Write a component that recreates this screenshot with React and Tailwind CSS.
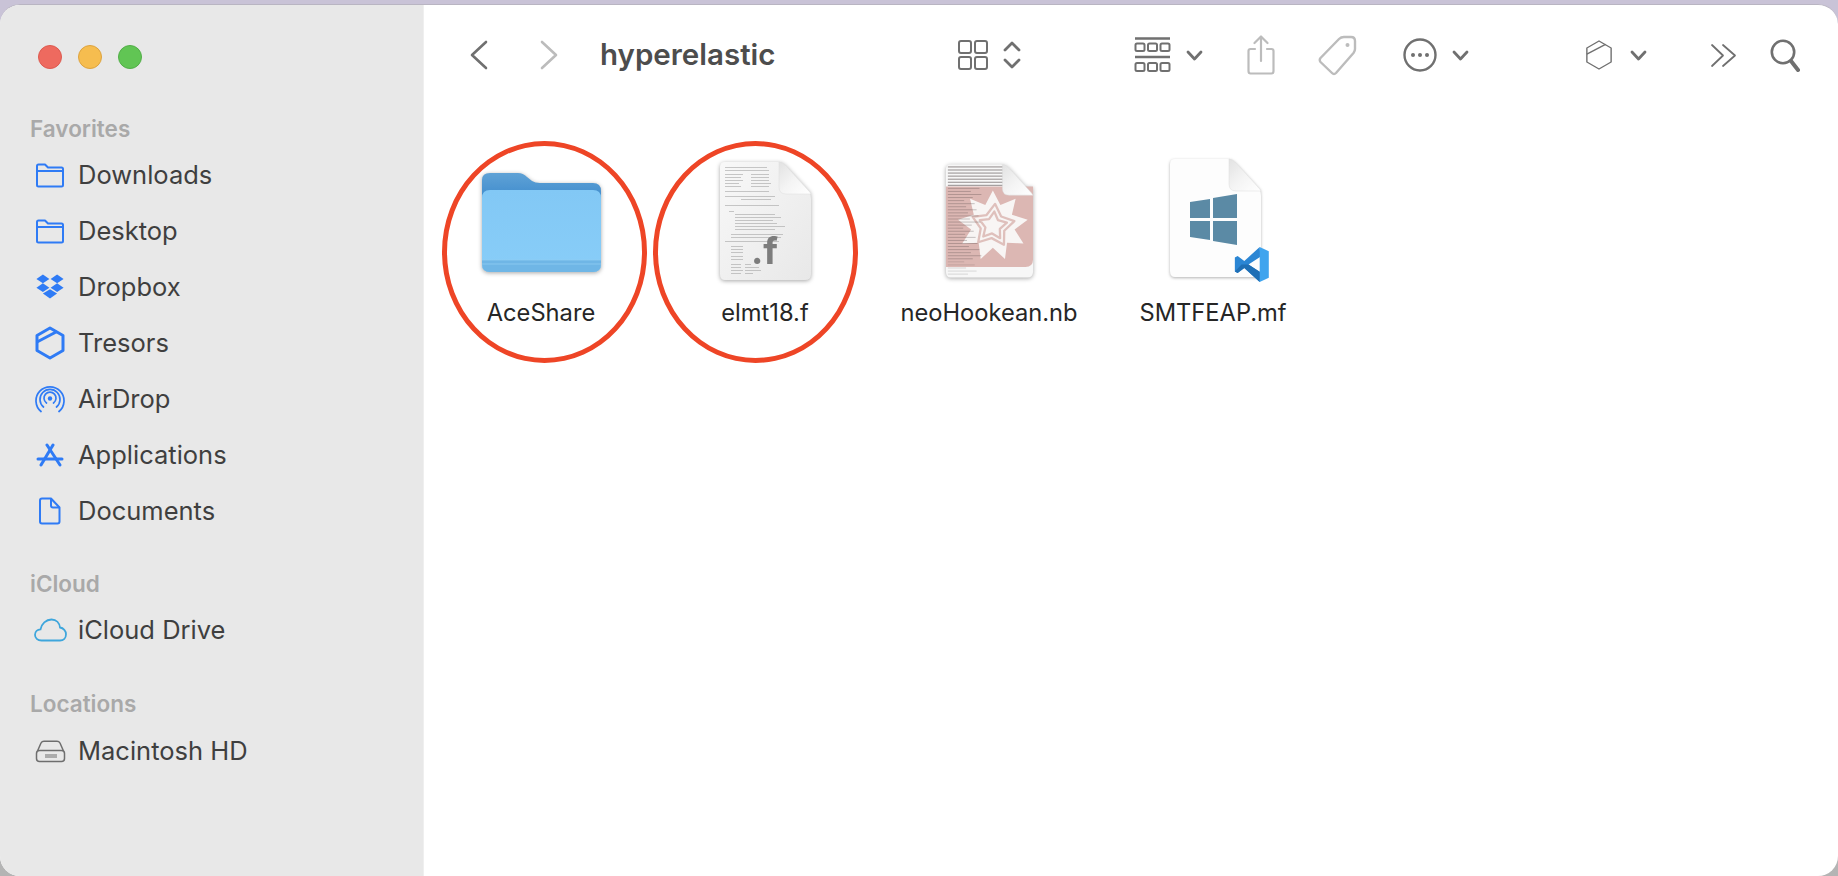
const FONT = "font-['Inter','Noto_Sans',sans-serif]";

const DOC_PATH = 'M6 1 H58 Q63 1 67 5 L88 28 Q92 32 92 38 V113 Q92 119 86 119 H6 Q1 119 1 113 V6 Q1 1 6 1 Z';

function FolderOutline() {
  return (
    <svg width="30" height="25" viewBox="0 0 30 25" fill="none" stroke="#2f7bf5" strokeWidth="2">
      <path d="M2 6 V3 Q2 1.500 3.500 1.500 H10 L13 4.500 H26.500 Q28 4.500 28 6 V22 Q28 23.500 26.500 23.500 H3.500 Q2 23.500 2 22 Z" strokeLinejoin="round" />
      <path d="M2 8 H28" />
    </svg>
  );
}

function Dropbox() {
  return (
    <svg width="30" height="26" viewBox="0 0 24 22" fill="#2f7bf5">
      <path d="M6 0.500 L0.500 4.200 L6 7.900 L11.500 4.200 Z M18 0.500 L12.500 4.200 L18 7.900 L23.500 4.200 Z M0.500 11.600 L6 15.300 L11.500 11.600 L6 7.900 Z M18 7.900 L12.500 11.600 L18 15.300 L23.500 11.600 Z M6 16.600 L12 20.800 L18 16.600 L12 12.800 Z" />
    </svg>
  );
}

function Hexagon({ w, h, color, sw }) {
  return (
    <svg width={w} height={h} viewBox="0 0 30 34" fill="none" stroke={color} strokeWidth={sw} strokeLinejoin="round">
      <path d="M15 2 L28 9.500 V24.500 L15 32 L2 24.500 V9.500 Z" />
      <path d="M2 16 L22 5.500" />
    </svg>
  );
}

function AirDrop() {
  return (
    <svg width="30" height="28" viewBox="0 0 30 28" fill="none" stroke="#2f7bf5" strokeWidth="1.700" strokeLinecap="round">
      <circle cx="15" cy="13.500" r="2.200" fill="#2f7bf5" stroke="none" />
      <path d="M11.500 18 A6 6 0 1 1 18.500 18" />
      <path d="M8.500 22 A10 10 0 1 1 21.500 22" />
      <path d="M6 26.500 A14 14 0 1 1 24 26.500" />
    </svg>
  );
}

function AppStore() {
  return (
    <svg width="28" height="24" viewBox="0 0 28 24" fill="none" stroke="#2f7bf5" strokeWidth="3" strokeLinecap="round">
      <path d="M17 2 L5 22" />
      <path d="M11 2 L24 22" />
      <path d="M2 16 H26" />
    </svg>
  );
}

function DocOutline() {
  return (
    <svg width="22" height="28" viewBox="0 0 22 28" fill="none" stroke="#2f7bf5" strokeWidth="2" strokeLinejoin="round">
      <path d="M3 1.500 H12 L20.500 10.500 V24.500 Q20.500 26.500 18.500 26.500 H3 Q1 26.500 1 24.500 V3.500 Q1 1.500 3 1.500 Z" />
      <path d="M12 1.500 V8.500 Q12 10.500 14 10.500 H20.500" />
    </svg>
  );
}

function CloudOutline() {
  return (
    <svg width="33" height="24" viewBox="0 0 33 24" fill="none" stroke="#3ea6dc" strokeWidth="1.800">
      <path d="M7.500 22.500 C3.500 22.500 1 20 1 16.800 C1 13.500 3.500 11.500 6.500 11.300 C7.500 6 12 1.500 17.500 1.500 C22.500 1.500 25.500 5 26 9.500 C29.500 10 32 13 32 16.300 C32 20 29.500 22.500 26 22.500 Z" />
    </svg>
  );
}

function Drive() {
  return (
    <svg width="31" height="23" viewBox="0 0 31 23" fill="none" stroke="#6e6e6e" strokeWidth="1.500">
      <path d="M2.500 11 L6 3 Q7 1.200 9 1.200 H22 Q24 1.200 25 3 L28.500 11" />
      <rect x="1.500" y="10.500" width="28" height="11" rx="3" />
      <path d="M11 14 V18 M13 14 V18 M15 14 V18 M17 14 V18 M19 14 V18 M21 14 V18" strokeWidth="1" />
    </svg>
  );
}

const SIDEBAR_TEXT = 'text-[25.500px] leading-none text-[#3f3f3f]';

function NavRow({ icon, label }) {
  return (
    <div className="flex h-[56px] items-center">
      <div className="flex w-[78px] items-center justify-center pl-[30px] pr-[8px]">{icon}</div>
      <span className={SIDEBAR_TEXT}>{label}</span>
    </div>
  );
}

function Heading({ children, className }) {
  return (
    <div className={'flex h-[28px] items-center pl-[30px] text-[22.500px] font-semibold text-[#a9a9a9] ' + className}>
      {children}
    </div>
  );
}

function Sidebar() {
  return (
    <aside className="flex w-[424px] shrink-0 flex-col border-r border-[#efefef] bg-[#e8e8e8]">
      <div className="flex gap-[16px] pl-[38px] pt-[40px]">
        <span className="h-[24px] w-[24px] rounded-full border border-[#dd5a50] bg-[#ee6a5f]" />
        <span className="h-[24px] w-[24px] rounded-full border border-[#dda33f] bg-[#f6bd4f]" />
        <span className="h-[24px] w-[24px] rounded-full border border-[#52ae48] bg-[#61c554]" />
      </div>
      <Heading className="mb-[4px] mt-[46px]">Favorites</Heading>
      <NavRow icon={<FolderOutline />} label="Downloads" />
      <NavRow icon={<FolderOutline />} label="Desktop" />
      <NavRow icon={<Dropbox />} label="Dropbox" />
      <NavRow icon={<Hexagon w={30} h={34} color="#2f7bf5" sw={3} />} label="Tresors" />
      <NavRow icon={<AirDrop />} label="AirDrop" />
      <NavRow icon={<AppStore />} label="Applications" />
      <NavRow icon={<DocOutline />} label="Documents" />
      <Heading className="mb-[4px] mt-[31px]">iCloud</Heading>
      <NavRow icon={<CloudOutline />} label="iCloud Drive" />
      <Heading className="mb-[5px] mt-[32px]">Locations</Heading>
      <NavRow icon={<Drive />} label="Macintosh HD" />
    </aside>
  );
}

function SmallChevron() {
  return (
    <svg width="17" height="11" viewBox="0 0 17 11" fill="none" stroke="#707070" strokeWidth="2.800" strokeLinecap="round" strokeLinejoin="round">
      <path d="M2 2 L8.500 9 L15 2" />
    </svg>
  );
}

function Toolbar() {
  return (
    <div className="flex h-[100px] items-center pl-[45px]">
      <svg width="19" height="30" viewBox="0 0 19 30" fill="none" stroke="#707070" strokeWidth="2.600" strokeLinecap="round" strokeLinejoin="round">
        <path d="M17 2 L3 15 L17 28" />
      </svg>
      <svg className="ml-[52px]" width="19" height="30" viewBox="0 0 19 30" fill="none" stroke="#bcbcbc" strokeWidth="2.600" strokeLinecap="round" strokeLinejoin="round">
        <path d="M2 2 L16 15 L2 28" />
      </svg>
      <span className="ml-[41px] w-[176px] whitespace-nowrap text-[29.500px] font-semibold leading-none text-[#4d4d4d]">hyperelastic</span>

      <svg className="ml-[182px]" width="30" height="30" viewBox="0 0 30 30" fill="none" stroke="#707070" strokeWidth="2">
        <rect x="1" y="1" width="12" height="12" rx="2" />
        <rect x="17" y="1" width="12" height="12" rx="2" />
        <rect x="1" y="17" width="12" height="12" rx="2" />
        <rect x="17" y="17" width="12" height="12" rx="2" />
      </svg>
      <svg className="ml-[15px]" width="18" height="30" viewBox="0 0 18 30" fill="none" stroke="#707070" strokeWidth="2.800" strokeLinecap="round" strokeLinejoin="round">
        <path d="M2 10 L9 3 L16 10" />
        <path d="M2 20 L9 27 L16 20" />
      </svg>

      <svg className="ml-[113px]" width="37" height="36" viewBox="0 0 37 36" fill="none" stroke="#707070">
        <path d="M1 1.500 H36 M1 20 H36" strokeWidth="2.600" />
        <rect x="1.500" y="6.500" width="9" height="7.500" rx="1.500" strokeWidth="2" />
        <rect x="14" y="6.500" width="9" height="7.500" rx="1.500" strokeWidth="2" />
        <rect x="26.500" y="6.500" width="9" height="7.500" rx="1.500" strokeWidth="2" />
        <rect x="1.500" y="26" width="9" height="8" rx="1.500" strokeWidth="2" />
        <rect x="14" y="26" width="9" height="8" rx="1.500" strokeWidth="2" />
        <rect x="26.500" y="26" width="9" height="8" rx="1.500" strokeWidth="2" />
      </svg>
      <div className="ml-[15px]"><SmallChevron /></div>

      <svg className="ml-[44px]" width="28" height="40" viewBox="0 0 28 40" fill="none" stroke="#bcbcbc" strokeWidth="2.200" strokeLinecap="round" strokeLinejoin="round">
        <path d="M8 14 H3.500 Q1.500 14 1.500 16 V36 Q1.500 38.500 3.500 38.500 H24.500 Q26.500 38.500 26.500 36 V16 Q26.500 14 24.500 14 H20" />
        <path d="M14 26 V2 M7.500 8 L14 1.500 L20.500 8" />
      </svg>
      <svg className="ml-[43px]" width="39" height="41" viewBox="0 0 39 41" fill="none" stroke="#bcbcbc" strokeWidth="2.400" strokeLinejoin="round">
        <path d="M26 2 H33 Q37 2 37 6 V14 Q37 16 35.500 18 L18 38 Q16 40 14 38 L2.500 27 Q1 25 2.500 23 L21 4 Q23 2 26 2 Z" />
        <circle cx="29.500" cy="10" r="2" fill="#bcbcbc" stroke="none" />
      </svg>
      <svg className="ml-[46px]" width="34" height="34" viewBox="0 0 34 34" fill="none" stroke="#707070" strokeWidth="2.400">
        <circle cx="17" cy="17" r="15.500" />
        <circle cx="10" cy="17" r="2" fill="#707070" stroke="none" />
        <circle cx="17" cy="17" r="2" fill="#707070" stroke="none" />
        <circle cx="24" cy="17" r="2" fill="#707070" stroke="none" />
      </svg>
      <div className="ml-[15px]"><SmallChevron /></div>

      <div className="ml-[116px] flex"><Hexagon w={28} h={32} color="#707070" sw={1.500} /></div>
      <div className="ml-[17px]"><SmallChevron /></div>

      <svg className="ml-[63px]" width="27" height="25" viewBox="0 0 27 25" fill="none" stroke="#707070" strokeWidth="1.800" strokeLinecap="round" strokeLinejoin="round">
        <path d="M2 2 L13 12.500 L2 23" />
        <path d="M13 2 L25 12.500 L13 23" />
      </svg>
      <svg className="ml-[33px]" width="30" height="33" viewBox="0 0 30 33" fill="none" stroke="#707070" strokeLinecap="round">
        <circle cx="13" cy="13" r="11.200" strokeWidth="2.600" />
        <path d="M21 22 L28 31" strokeWidth="4" />
      </svg>
    </div>
  );
}

function FolderBig() {
  return (
    <svg className="mb-[8px] drop-shadow-[0_1px_2px_rgba(0,0,0,0.35)]" width="119" height="101" viewBox="0 0 119 101">
      <defs>
        <linearGradient id="folderBack" x1="0" y1="0" x2="0" y2="1">
          <stop offset="0" stopColor="#5fa2d6" />
          <stop offset="1" stopColor="#2f80c8" />
        </linearGradient>
        <linearGradient id="folderFront" x1="0" y1="0" x2="0" y2="1">
          <stop offset="0" stopColor="#82c8f5" />
          <stop offset="1" stopColor="#88cdf8" />
        </linearGradient>
      </defs>
      <path d="M0 8 Q0 1 8 1 H36 Q41 1 45 5 L50 9 Q53 11 58 11 H111 Q119 11 119 19 V40 H0 Z" fill="url(#folderBack)" />
      <path d="M0 26 Q0 18 8 18 H111 Q119 18 119 26 V92 Q119 100 111 100 H8 Q0 100 0 92 Z" fill="url(#folderFront)" />
      <path d="M0 88 H119 V92 Q119 100 111 100 H8 Q0 100 0 92 Z" fill="#6fb6e6" />
      <path d="M0 88 H119 M0 92 H119" stroke="#8fcdf3" strokeWidth="0.800" />
    </svg>
  );
}

function FoldCorner({ id }) {
  return (
    <>
      <defs>
        <linearGradient id={id} x1="0" y1="0" x2="1" y2="1">
          <stop offset="0" stopColor="#e2e2e2" />
          <stop offset="0.500" stopColor="#f4f4f4" />
          <stop offset="1" stopColor="#ffffff" />
        </linearGradient>
      </defs>
      <path d="M60 1 Q63 1 67 5 L88 28 Q91 31 92 33 H67 Q60 33 60 26 Z" fill={'url(#' + id + ')'} stroke="#dcdcdc" strokeWidth="0.500" />
    </>
  );
}

// tiny printed-page lines for the thumbnails: [x, y, width]
const SOURCE_LINES = [
  [6, 6, 42], [6, 9, 44], [6, 13, 18], [32, 13, 18], [6, 16, 16], [32, 16, 18], [6, 19, 18], [32, 19, 18],
  [6, 22, 14], [32, 22, 20], [6, 25, 16], [32, 25, 18], [6, 30, 44], [6, 35, 50], [22, 38, 30], [6, 44, 54],
  [10, 50, 5], [16, 53, 40], [16, 56, 46], [16, 59, 38], [16, 62, 42], [16, 65, 50], [16, 68, 40], [12, 73, 52],
  [12, 76, 50], [6, 80, 54], [12, 85, 12], [12, 88, 12], [12, 91, 12], [12, 95, 12], [12, 98, 12],
  [12, 103, 10], [26, 103, 6], [12, 106, 10], [26, 106, 14], [12, 109, 12], [26, 109, 16], [12, 112, 10], [26, 112, 8],
];

function SourceDoc() {
  return (
    <svg className="drop-shadow-[0_1px_2px_rgba(0,0,0,0.35)]" width="93" height="120" viewBox="0 0 93 120">
      <defs>
        <linearGradient id="srcPage" x1="0" y1="0" x2="1" y2="1">
          <stop offset="0" stopColor="#f8f8f8" />
          <stop offset="1" stopColor="#e8e8e8" />
        </linearGradient>
      </defs>
      <path d={DOC_PATH} fill="url(#srcPage)" />
      {SOURCE_LINES.map(([x, y, w], i) => (
        <rect key={i} x={x} y={y} width={w} height="0.600" fill="#a6a6a6" />
      ))}
      <FoldCorner id="srcFold" />
      <text x="32" y="103" fontFamily="Inter" fontWeight="700" fontSize="37" fill="#7d7d7d">.f</text>
    </svg>
  );
}

// wolfram-like spiky star, points around a centre with alternating radii
function starPoints(cx, cy, spikes, outer, inner, rot) {
  const pts = [];
  for (let i = 0; i < spikes * 2; i++) {
    const r = i % 2 === 0 ? outer : inner;
    const a = rot + (Math.PI * i) / spikes;
    pts.push((cx + r * Math.sin(a)).toFixed(1) + ',' + (cy - r * Math.cos(a)).toFixed(1));
  }
  return pts.join(' ');
}

const NOTEBOOK_LINES = Array.from({ length: 36 }, (_, i) => {
  const top = i < 7;
  return {
    y: 3 + i * 3.200,
    w: top ? 58 + ((i * 7) % 10) : 16 + ((i * 11) % 20),
    o: top ? 0.6 : i < 31 ? 0.3 : 0.18,
  };
});

function NotebookDoc() {
  return (
    <svg className="drop-shadow-[0_1px_2px_rgba(0,0,0,0.35)]" width="89" height="120" viewBox="0 0 93 120">
      <path d={DOC_PATH} fill="#f7f7f7" />
      <path d="M1 24 H92 V100 Q92 108 84 108 H1 Z" fill="#dcb7b3" />
      <polygon points={starPoints(50, 65, 9, 37, 23, 0)} fill="#f8f5f4" />
      <polygon points={starPoints(50, 65, 5, 23, 13, 0.1)} fill="none" stroke="#dfc0bc" strokeWidth="2.400" strokeLinejoin="round" />
      <polygon points={starPoints(50, 65, 5, 15, 8, 0.1)} fill="none" stroke="#dfc0bc" strokeWidth="2.400" strokeLinejoin="round" />
      {NOTEBOOK_LINES.map((l, i) => (
        <rect key={i} x="3" y={l.y} width={l.w} height="1" fill="#4a4040" opacity={l.o} />
      ))}
      <FoldCorner id="nbFold" />
    </svg>
  );
}

function ManifestDoc() {
  return (
    <div className="relative mb-[3px] ml-[4px] h-[120px] w-[93px]">
      <svg className="drop-shadow-[0_1px_1.500px_rgba(0,0,0,0.3)]" width="93" height="120" viewBox="0 0 93 120">
        <path d={DOC_PATH} fill="#fdfdfd" />
        <FoldCorner id="mfFold" />
        <path d="M21 44 L41 41 V60 H21 Z M44 40 L68 36 V60 H44 Z M21 63 H41 V82 L21 79 Z M44 63 H68 V87 L44 83 Z" fill="#5b8aa5" />
      </svg>
      <svg className="absolute bottom-[-4px] right-[-8px]" width="36" height="35" viewBox="0 0 100 100">
        <path d="M72 0 L28 40 L9 26 L1 30 V70 L9 74 L28 60 L72 100 L74 72 L40 50 L74 28 Z" fill="#2b86d4" />
        <path d="M72 100 L28 60 L9 74 L1 70 L20 50 L40 50 L74 72 Z" fill="#1f6fb5" />
        <path d="M72 0 L98 12 V88 L72 100 Z" fill="#3fa4ee" />
      </svg>
    </div>
  );
}

function FileItem({ icon, label }) {
  return (
    <div className="flex w-[224px] flex-col items-center">
      <div className="flex h-[122px] items-end justify-center">{icon}</div>
      <span className="mt-[18px] text-[23.700px] leading-[28px] text-[#262626]">{label}</span>
    </div>
  );
}

export default function App() {
  return (
    <div className={'h-[876px] w-full overflow-hidden bg-[linear-gradient(#c9c3d7_0,#c9c3d7_20px,#b4b4b4_100%)] pt-[4px] ' + FONT}>
      <div className="flex h-[872px] overflow-hidden rounded-[20px] border-t border-[#b9b5c2] bg-white">
        <Sidebar />
        <main className="relative min-w-0 flex-1">
          <Toolbar />
          <div className="flex pl-[5px] pt-[54px]">
            <FileItem icon={<FolderBig />} label="AceShare" />
            <FileItem icon={<SourceDoc />} label="elmt18.f" />
            <FileItem icon={<NotebookDoc />} label="neoHookean.nb" />
            <FileItem icon={<ManifestDoc />} label="SMTFEAP.mf" />
          </div>
          <div className="absolute left-[18px] top-[136px] h-[222px] w-[205px] rounded-[50%] border-[5px] border-[#ee4526]" />
          <div className="absolute left-[229px] top-[136px] h-[222px] w-[205px] rounded-[50%] border-[5px] border-[#ee4526]" />
        </main>
      </div>
    </div>
  );
}
